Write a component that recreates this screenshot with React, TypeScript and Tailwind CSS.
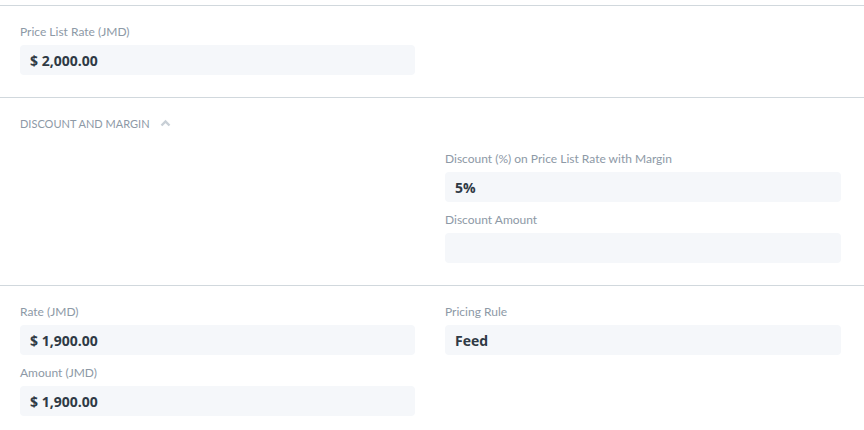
import { ReactNode } from "react";

function Field({ label, value }: { label: string; value?: string }) {
  return (
    <div className="mb-[9px]">
      <div className="h-[17px] mb-[5px] text-[12px] leading-[17px] text-[#8d99a6]">{label}</div>
      <div
        className="h-[30px] rounded-[4px] bg-[#f5f7fa] px-[10px] flex items-center text-[14px] font-bold text-[#2f3a45]"
        style={{ fontFamily: "'Open Sans', Lato, sans-serif" }}
      >
        {value}
      </div>
    </div>
  );
}

function Section({ children }: { children: ReactNode }) {
  return <div className="border-t border-[#d1d8dd] pt-[17px] pb-[13px] pl-[20px] pr-[23px]">{children}</div>;
}

export default function App() {
  return (
    <div className="w-[864px] h-[430px] bg-white overflow-hidden" style={{ fontFamily: "Lato, 'Open Sans', sans-serif" }}>
      <div className="h-[5px]" />
      <Section>
        <div className="grid grid-cols-[395px_396px] gap-x-[30px]">
          <Field label="Price List Rate (JMD)" value="$ 2,000.00" />
          <div />
        </div>
      </Section>

      <Section>
        <div className="h-[18px] mb-[17px] flex items-center gap-[10px] text-[11px] uppercase text-[#8d99a6]">
          <span>Discount and Margin</span>
          <svg width="11" height="8" viewBox="0 0 11 8" className="mt-[-2px]">
            <polyline points="1.5,6.5 5.5,2.5 9.5,6.5" fill="none" stroke="#c8cfd6" strokeWidth="2.4" />
          </svg>
        </div>
        <div className="grid grid-cols-[395px_396px] gap-x-[30px]">
          <div />
          <div>
            <Field label="Discount (%) on Price List Rate with Margin" value="5%" />
            <Field label="Discount Amount" />
          </div>
        </div>
      </Section>

      <Section>
        <div className="grid grid-cols-[395px_396px] gap-x-[30px]">
          <div>
            <Field label="Rate (JMD)" value="$ 1,900.00" />
            <Field label="Amount (JMD)" value="$ 1,900.00" />
          </div>
          <div>
            <Field label="Pricing Rule" value="Feed" />
          </div>
        </div>
      </Section>
    </div>
  );
}
